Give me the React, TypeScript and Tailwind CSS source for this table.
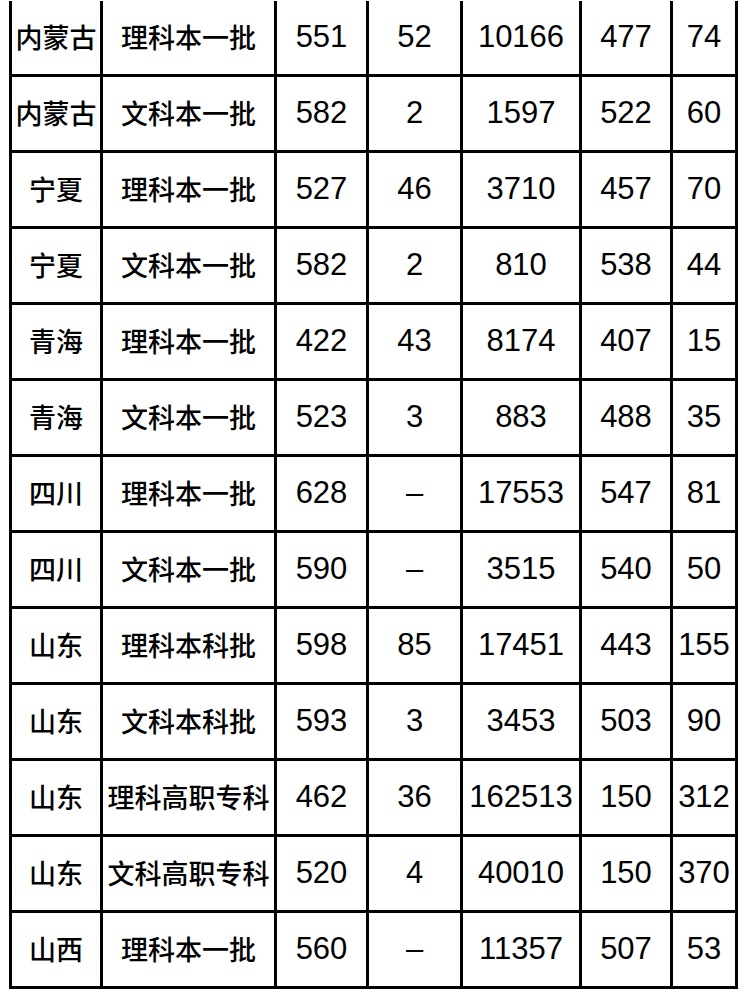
const rows: string[][] = [
  ["内蒙古", "理科本一批", "551", "52", "10166", "477", "74"],
  ["内蒙古", "文科本一批", "582", "2", "1597", "522", "60"],
  ["宁夏", "理科本一批", "527", "46", "3710", "457", "70"],
  ["宁夏", "文科本一批", "582", "2", "810", "538", "44"],
  ["青海", "理科本一批", "422", "43", "8174", "407", "15"],
  ["青海", "文科本一批", "523", "3", "883", "488", "35"],
  ["四川", "理科本一批", "628", "–", "17553", "547", "81"],
  ["四川", "文科本一批", "590", "–", "3515", "540", "50"],
  ["山东", "理科本科批", "598", "85", "17451", "443", "155"],
  ["山东", "文科本科批", "593", "3", "3453", "503", "90"],
  ["山东", "理科高职专科", "462", "36", "162513", "150", "312"],
  ["山东", "文科高职专科", "520", "4", "40010", "150", "370"],
  ["山西", "理科本一批", "560", "–", "11357", "507", "53"],
];

export default function App() {
  return (
    <div className="w-[746px] h-[1000px] bg-white pt-px">
      <div className="ml-[9px] w-[729px] border-l-[3px] border-black grid grid-cols-[91px_174px_92px_94px_119px_91px_65px]">
        {rows.map((row, i) =>
          row.map((cell, j) => (
            <div
              key={`${i}-${j}`}
              className={`h-[76px] border-r-[3px] border-b-[3px] border-black flex items-center justify-center text-black whitespace-nowrap ${
                j < 2
                  ? "text-[27px] font-medium font-['Noto_Sans_CJK_SC',sans-serif]"
                  : "text-[31px] font-['Liberation_Sans','Noto_Sans_CJK_SC',sans-serif]"
              }`}
            >
              {cell}
            </div>
          ))
        )}
      </div>
    </div>
  );
}
